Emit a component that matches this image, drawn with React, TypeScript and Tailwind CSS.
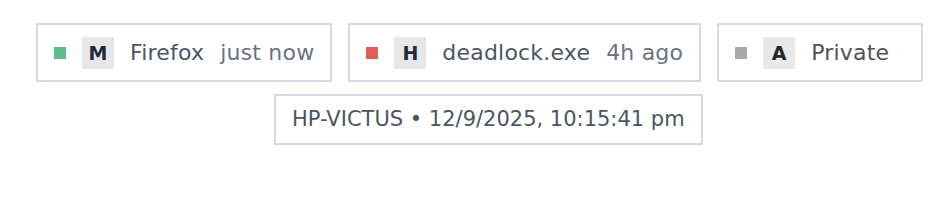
import React from "react";

type Chip = {
  color: string;
  letter: string;
  name: string;
  time?: string;
  tone: "gray" | "neutral";
};

const chips: Chip[] = [
  { color: "bg-[#5fbd8d]", letter: "M", name: "Firefox", time: "just now", tone: "gray" },
  { color: "bg-[#e05c56]", letter: "H", name: "deadlock.exe", time: "4h ago", tone: "gray" },
  { color: "bg-[#a8a8a8]", letter: "A", name: "Private", tone: "neutral" },
];

function ChipBox({ chip }: { chip: Chip }) {
  const gray = chip.tone === "gray";
  return (
    <div
      className={`flex items-center gap-4 border-2 px-4 pt-3 pb-[11px] ${
        gray ? "border-[#d6d9de]" : "border-[#dadada]"
      }`}
    >
      <span className={`w-3 h-3 ${chip.color}`} />
      <span
        className={`w-8 h-8 flex items-center justify-center text-[19px] font-bold ${
          gray ? "bg-[#e5e7eb] text-[#1f2937]" : "bg-[#e8e8e8] text-[#262626]"
        }`}
      >
        {chip.letter}
      </span>
      <span
        className={`text-[22px] leading-8 tracking-[0.2px] ${
          gray ? "text-[#4b5563]" : "text-[#525252]"
        }`}
      >
        {chip.name}
      </span>
      {/* time slot stays in the row even when empty, so the gap keeps the box width */}
      <span className="text-[22px] leading-8 tracking-[0.2px] text-[#6b7280]">{chip.time ?? ""}</span>
    </div>
  );
}

export default function App() {
  return (
    <div
      className="w-[938px] h-[206px] bg-white pt-[23px]"
      style={{ fontFamily: '"DejaVu Sans", sans-serif' }}
    >
      <div className="flex gap-4 pl-[36px]">
        {chips.map((c) => (
          <ChipBox key={c.name} chip={c} />
        ))}
      </div>
      <div className="pl-[274px] mt-3 flex">
        <div className="border-2 border-[#d6d9de] px-4 py-2 text-[21px] leading-[31px] text-[#4b5563]">
          HP-VICTUS • 12/9/2025, 10:15:41 pm
        </div>
      </div>
    </div>
  );
}
